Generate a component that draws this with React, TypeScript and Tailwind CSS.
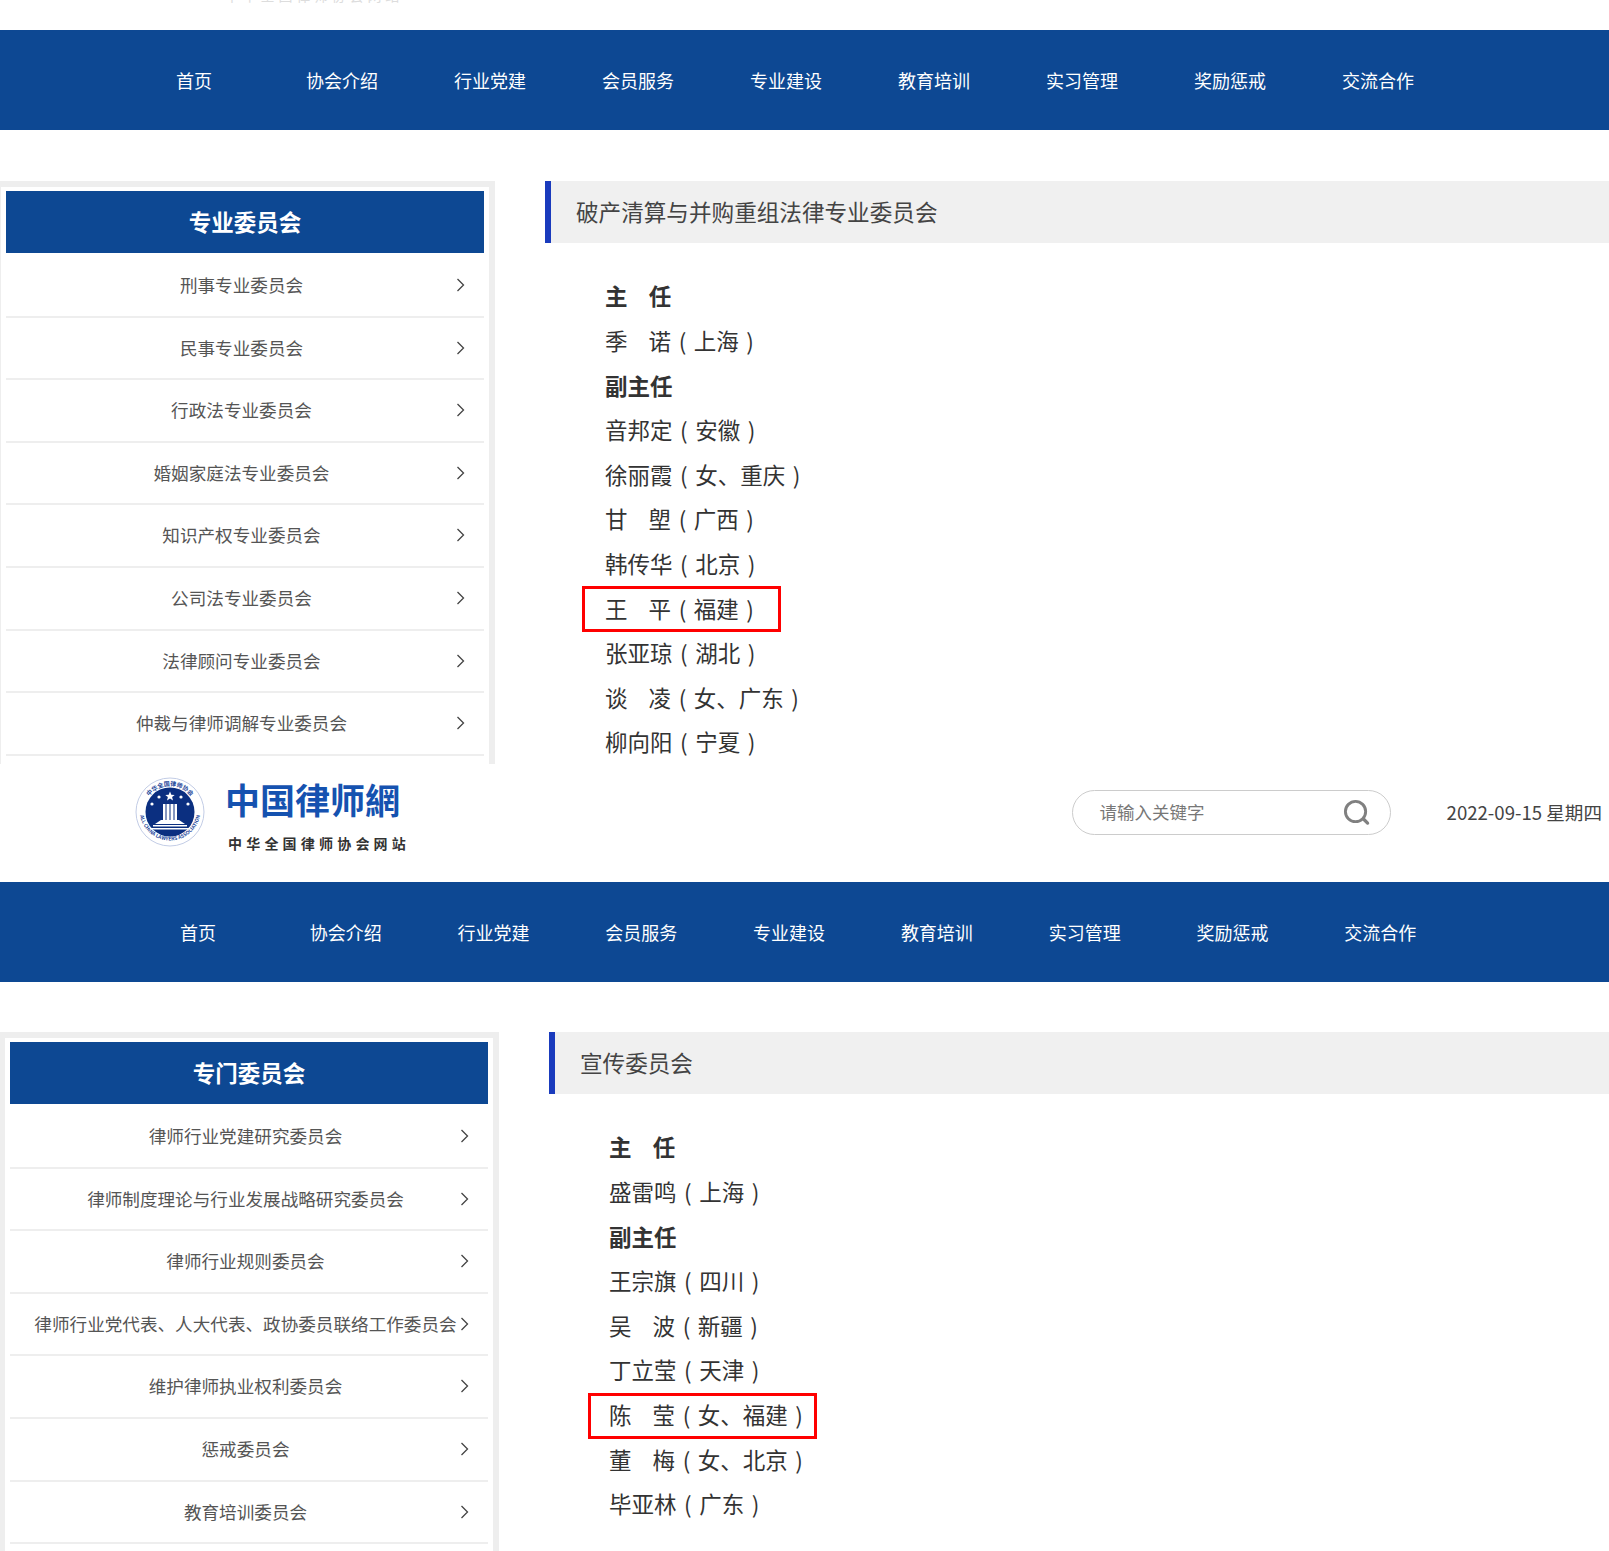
const font = '[font-family:"Noto_Sans_CJK_SC","Noto_Sans",sans-serif]';

const navItems = ['首页', '协会介绍', '行业党建', '会员服务', '专业建设', '教育培训', '实习管理', '奖励惩戒', '交流合作'];

const sideA = [
  '刑事专业委员会',
  '民事专业委员会',
  '行政法专业委员会',
  '婚姻家庭法专业委员会',
  '知识产权专业委员会',
  '公司法专业委员会',
  '法律顾问专业委员会',
  '仲裁与律师调解专业委员会',
];

const sideB = [
  '律师行业党建研究委员会',
  '律师制度理论与行业发展战略研究委员会',
  '律师行业规则委员会',
  '律师行业党代表、人大代表、政协委员联络工作委员会',
  '维护律师执业权利委员会',
  '惩戒委员会',
  '教育培训委员会',
  '',
];

type Row = { name: string; place?: string; bold?: boolean; mark?: boolean };

const listA: Row[] = [
  { name: '主   任', bold: true },
  { name: '季   诺', place: ' ( 上海 )' },
  { name: '副主任', bold: true },
  { name: '音邦定', place: ' ( 安徽 )' },
  { name: '徐丽霞', place: ' ( 女、重庆 )' },
  { name: '甘   塱', place: ' ( 广西 )' },
  { name: '韩传华', place: ' ( 北京 )' },
  { name: '王   平', place: ' ( 福建 )', mark: true },
  { name: '张亚琼', place: ' ( 湖北 )' },
  { name: '谈   凌', place: ' ( 女、广东 )' },
  { name: '柳向阳', place: ' ( 宁夏 )' },
];

const listB: Row[] = [
  { name: '主   任', bold: true },
  { name: '盛雷鸣', place: ' ( 上海 )' },
  { name: '副主任', bold: true },
  { name: '王宗旗', place: ' ( 四川 )' },
  { name: '吴   波', place: ' ( 新疆 )' },
  { name: '丁立莹', place: ' ( 天津 )' },
  { name: '陈   莹', place: ' ( 女、福建 )', mark: true },
  { name: '董   梅', place: ' ( 女、北京 )' },
  { name: '毕亚林', place: ' ( 广东 )' },
];

const Nav = ({ className }: { className: string }) => (
  <nav className="flex h-[100px] items-center bg-[#0d4893] text-[18px] text-white">
    {navItems.map((item, i) => (
      <a key={item} className={`text-center ${className} ${i === 0 ? 'ml-[124px]' : ''}`}>
        {item}
      </a>
    ))}
  </nav>
);

const Sidebar = ({ title, items }: { title: string; items: string[] }) => (
  <aside className="w-[499px] shrink-0 border-t-[6px] border-r-[6px] border-l-[5px] border-[#eeeeee] bg-white pt-1 pr-[5px] pl-[5px]">
    <h2 className="flex h-[62px] items-center justify-center bg-[#0d4893] text-[22.5px] font-bold text-white">
      {title}
    </h2>
    <ul className="pt-[2px]">
      {items.map((item, i) => (
        <li
          key={i}
          className="relative flex h-[62.6px] items-center justify-center border-b-2 border-[#eeeeee] pr-[7px] text-[17.6px] text-[#555555]"
        >
          {item}
          <svg
            className="absolute top-[23px] right-[19px]"
            width="9"
            height="14"
            viewBox="0 0 9 14"
            fill="none"
            stroke="#444444"
            strokeWidth="1.3"
          >
            <path d="M1.5 1l6 6-6 6" />
          </svg>
        </li>
      ))}
    </ul>
  </aside>
);

const Content = ({ title, rows, markClass }: { title: string; rows: Row[]; markClass: string }) => (
  <section className="ml-[50px] flex-1">
    <h1 className="flex h-[62px] items-center border-l-[6px] border-[#1a3bbd] bg-[#f0f0f0] pl-[25px] text-[22.6px] text-[#444444]">
      {title}
    </h1>
    <ul className="pt-[31px] pl-[60px] text-[22.5px] text-[#333333]">
      {rows.map((row) => (
        <li
          key={row.name}
          className={`relative flex h-[44.6px] items-center whitespace-pre ${row.bold ? 'font-bold' : ''}`}
        >
          <span className="[word-spacing:2px]">{row.name}</span>
          {row.place && <span className="[word-spacing:2.5px]">{row.place}</span>}
          {row.mark && <span className={`absolute top-0 h-[46px] border-[3px] border-[#ff0000] ${markClass}`} />}
        </li>
      ))}
    </ul>
  </section>
);

const Seal = () => (
  <svg width="70" height="70" viewBox="0 0 70 70" className="shrink-0">
    <circle cx="35" cy="35" r="34" fill="#ffffff" stroke="#c3cde6" strokeWidth="1" />
    <circle cx="35" cy="35" r="24.5" fill="#0b2f80" />
    <defs>
      <path id="sealTop" d="M9 35a26 26 0 0 1 52 0" />
      <path id="sealBottom" d="M4.5 33a30.5 30.5 0 0 0 61 0" />
    </defs>
    <text fontSize="6" fill="#24479a" fontWeight="700">
      <textPath href="#sealTop" startOffset="50%" textAnchor="middle">
        中华全国律师协会
      </textPath>
    </text>
    <text fontSize="5" fill="#24479a" fontWeight="700">
      <textPath href="#sealBottom" startOffset="50%" textAnchor="middle">
        ALL CHINA LAWYERS ASSOCIATION
      </textPath>
    </text>
    <g fill="#ffffff">
      <path d="M35 14.5l1.3 3.2 3.4.2-2.6 2.2.9 3.3-3-1.8-3 1.8.9-3.3-2.6-2.2 3.4-.2z" />
      <circle cx="24" cy="20" r="1.6" />
      <circle cx="46" cy="20" r="1.6" />
      <circle cx="17" cy="27" r="1.6" />
      <circle cx="53" cy="27" r="1.6" />
      <path d="M28 27h14v16h-14z" />
      <path d="M26 43h18l6 4H20z" />
      <path d="M18 48h34v1.5H18zM15 51h40v1.5H15z" />
    </g>
    <path d="M31 27v16M35 27v16M39 27v16" stroke="#0b2f80" strokeWidth="1" />
  </svg>
);

const SearchIcon = () => (
  <svg width="27" height="27" viewBox="0 0 28 28" fill="none" stroke="#808080">
    <circle cx="13" cy="13" r="10.5" strokeWidth="3" />
    <path d="M21.5 21l4 4" strokeWidth="3.4" strokeLinecap="round" />
  </svg>
);

const SiteHeader = () => (
  <header className="flex h-[118px] items-center pr-[7px] pb-[22px] pl-[135px]">
    <Seal />
    <div className="ml-[20px] flex flex-col pt-[5px]">
      <span className="text-[35px] leading-[42px] font-bold text-[#1552b0]">中国律师網</span>
      <span className="mt-[15px] ml-[3px] text-[14px] leading-[16px] font-bold tracking-[4.2px] text-[#333333]">
        中华全国律师协会网站
      </span>
    </div>
    <div className="ml-auto flex h-[45px] w-[319px] items-center justify-between rounded-full border border-[#cccccc] pr-[20px] pl-[27px]">
      <span className="text-[17.5px] text-[#777777]">请输入关键字</span>
      <SearchIcon />
    </div>
    <span className="ml-[56px] text-[18.6px] text-[#444444]">2022-09-15 星期四</span>
  </header>
);

export default function App() {
  return (
    <div className={`w-[1609px] overflow-hidden bg-white ${font}`}>
      {/* first capture, scrolled and shifted a little to the left */}
      <div className="-ml-[4px] h-[764px] overflow-hidden">
        <div className="h-[30px] overflow-hidden pl-[229px]">
          <div className="-mt-[13px] text-[14px] leading-[16px] tracking-[3.8px] text-[#dddddd]">中华全国律师协会网站</div>
        </div>
        <Nav className="w-[148px]" />
        <div className="mt-[51px] flex">
          <Sidebar title="专业委员会" items={sideA} />
          <Content title="破产清算与并购重组法律专业委员会" rows={listA} markClass="-left-[23px] w-[199px]" />
        </div>
      </div>

      {/* second capture */}
      <div className="h-[787px] overflow-hidden">
        <SiteHeader />
        <Nav className="w-[147.8px]" />
        <div className="mt-[50px] flex">
          <Sidebar title="专门委员会" items={sideB} />
          <Content title="宣传委员会" rows={listB} markClass="-left-[21px] w-[229px]" />
        </div>
      </div>
    </div>
  );
}
